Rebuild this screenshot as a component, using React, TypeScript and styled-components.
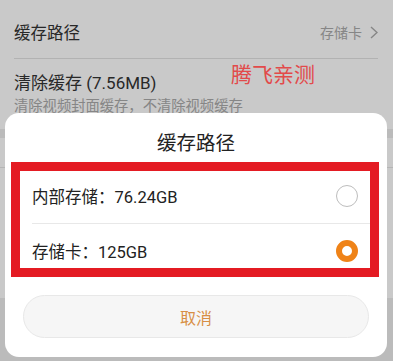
import React from "react";
import styled, { createGlobalStyle } from "styled-components";

const GlobalStyle = createGlobalStyle`
  html, body { margin: 0; padding: 0; }
  body {
    font-family: Roboto, "Noto Sans CJK SC", "Noto Sans", sans-serif;
    background: #bcbcbc;
  }
  * { box-sizing: border-box; }
`;

const Screen = styled.div`
  position: relative;
  width: 393px;
  height: 361px;
  overflow: hidden;
  background: #eeeeee;
  display: flex;
  flex-direction: column;
`;

const Section = styled.div<{ $height?: number }>`
  background: #ffffff;
  display: flex;
  flex-direction: column;
  ${(p) => (p.$height ? `height: ${p.$height}px;` : "")}
`;

const SettingRow = styled.div`
  height: 58px;
  padding: 6px 15px 0 14px;
  display: flex;
  align-items: center;
  justify-content: space-between;
`;

const SettingLabel = styled.span`
  font-size: 16.5px;
  color: #333333;
`;

const SettingValue = styled.span`
  display: flex;
  align-items: center;
  gap: 8px;
  font-size: 14px;
  color: #aaaaaa;
`;

const Divider = styled.div<{ $left: number; $right: number; $color?: string }>`
  height: 1px;
  margin: 0 ${(p) => p.$right}px 0 ${(p) => p.$left}px;
  background: ${(p) => p.$color ?? "#e2e2e2"};
  flex-shrink: 0;
`;

const ClearItem = styled.div`
  padding: 13px 14px 14px;
  display: flex;
  flex-direction: column;
  gap: 3px;
`;

const ClearTitle = styled.span`
  font-size: 17px;
  line-height: 22px;
  color: #333333;
`;

const ClearSub = styled.span`
  font-size: 14.3px;
  line-height: 18px;
  color: #aaaaaa;
  white-space: nowrap;
`;

const Gap = styled.div<{ $h: number }>`
  height: ${(p) => p.$h}px;
  flex-shrink: 0;
`;

const Overlay = styled.div`
  position: absolute;
  inset: 0;
  background: rgba(0, 0, 0, 0.21);
`;

const Dialog = styled.div`
  position: absolute;
  left: 5px;
  top: 113px;
  width: 382px;
  height: 244px;
  background: #ffffff;
  border-radius: 14px;
  display: flex;
  flex-direction: column;
`;

const DialogTitle = styled.div`
  height: 56px;
  display: flex;
  align-items: center;
  justify-content: center;
  font-size: 19.5px;
  color: #222222;
`;

const OptionRow = styled.div`
  height: 54px;
  padding: 0 29px 0 27px;
  display: flex;
  align-items: center;
  justify-content: space-between;
`;

const OptionLabel = styled.span`
  font-size: 16.5px;
  color: #222222;
`;

const Radio = styled.span<{ $checked?: boolean }>`
  width: 22px;
  height: 22px;
  border-radius: 50%;
  border: ${(p) => (p.$checked ? "6px solid #ef8318" : "1px solid #bdbdbd")};
  background: #ffffff;
  flex-shrink: 0;
`;

const CancelButton = styled.button`
  margin: 17px 18px 0;
  height: 43px;
  border-radius: 22px;
  border: 1px solid #e8e8e8;
  background: #f6f6f6;
  color: #d88f45;
  font-family: inherit;
  font-size: 16px;
  display: flex;
  align-items: center;
  justify-content: center;
`;

const Annotation = styled.div`
  position: absolute;
  left: 11px;
  top: 162px;
  width: 368px;
  height: 115px;
  border: 9px solid #e41b23;
`;

const Watermark = styled.span`
  position: absolute;
  left: 231px;
  top: 58px;
  font-size: 21px;
  line-height: 30px;
  color: #e24a4a;
  font-family: "Noto Sans CJK SC", sans-serif;
`;

const Chevron = () => (
  <svg width="8" height="13" viewBox="0 0 8 13" fill="none">
    <polyline points="1,1 7,6.5 1,12" stroke="#aaaaaa" strokeWidth="1.4" />
  </svg>
);

export default function App() {
  return (
    <>
      <GlobalStyle />
      <Screen>
        <Section>
          <SettingRow>
            <SettingLabel>缓存路径</SettingLabel>
            <SettingValue>
              存储卡
              <Chevron />
            </SettingValue>
          </SettingRow>
          <Divider $left={14} $right={15} />
          <ClearItem>
            <ClearTitle>清除缓存 (7.56MB)</ClearTitle>
            <ClearSub>清除视频封面缓存，不清除视频缓存</ClearSub>
          </ClearItem>
        </Section>
        <Gap $h={9} />
        <Section $height={29} />
        <Divider $left={0} $right={0} $color="#e6e6e6" />
        <Section $height={130} />

        <Overlay />
        <Dialog>
          <DialogTitle>缓存路径</DialogTitle>
          <OptionRow>
            <OptionLabel>内部存储：76.24GB</OptionLabel>
            <Radio />
          </OptionRow>
          <Divider $left={27} $right={16} $color="#e8e8e8" />
          <OptionRow>
            <OptionLabel>存储卡：125GB</OptionLabel>
            <Radio $checked />
          </OptionRow>
          <CancelButton>取消</CancelButton>
        </Dialog>
        <Annotation />
        <Watermark>腾飞亲测</Watermark>
      </Screen>
    </>
  );
}
